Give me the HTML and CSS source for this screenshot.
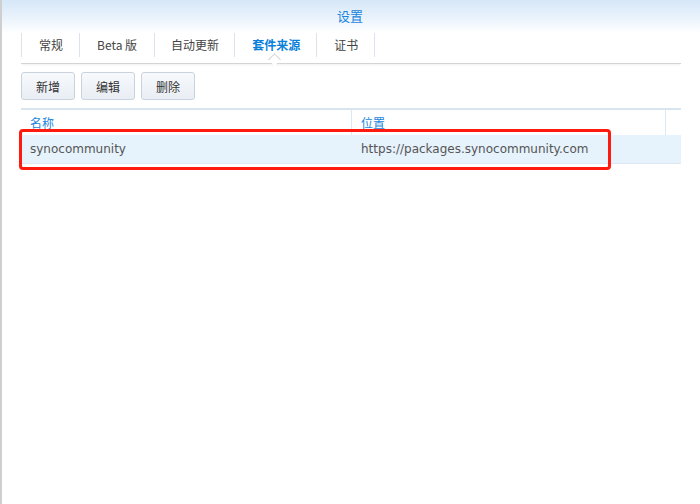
FILE: index.html
```html
<!DOCTYPE html>
<html lang="zh-CN">
<head>
<meta charset="utf-8">
<link rel="stylesheet" href="styles.css">
</head>
<body>
<div class="window">
  <div class="edge-top"></div>
  <div class="edge-active"></div>
  <div class="titlebar">设置</div>
  <div class="content">
    <div class="tabs">
      <div class="tab">常规</div>
      <div class="tab tab-beta">Beta 版</div>
      <div class="tab tab-auto">自动更新</div>
      <div class="tab active">套件来源</div>
      <div class="tab">证书</div>
      <div class="tab-end"></div>
    </div>
    <div class="toolbar">
      <button class="btn">新增</button>
      <button class="btn">编辑</button>
      <button class="btn">删除</button>
    </div>
    <div class="grid">
      <div class="grid-head">
        <div class="col col-name">名称</div>
        <div class="col col-loc">位置</div>
        <div class="col col-rest"></div>
      </div>
      <div class="grid-row">
        <div class="col col-name">synocommunity</div>
        <div class="col col-loc">https://packages.synocommunity.com</div>
        <div class="col col-rest"></div>
      </div>
      <div class="highlight"></div>
    </div>
  </div>
</div>
</body>
</html>
```

FILE: styles.css
```css
html, body {
  margin: 0;
  padding: 0;
  background: #ffffff;
}
body {
  font-family: "DejaVu Sans", "Noto Sans CJK SC", sans-serif;
  color: #555;
}
.window {
  position: relative;
  width: 700px;
  height: 504px;
  border-left: 2px solid #cfcfcf;
  box-sizing: border-box;
  overflow: hidden;
}
.edge-top {
  position: absolute;
  left: -2px;
  top: 0;
  width: 2px;
  height: 60px;
  background: #bdbdbd;
}
.edge-active {
  position: absolute;
  left: -2px;
  top: 127px;
  width: 2px;
  height: 50px;
  background: #0b6fc1;
}
.titlebar {
  height: 33px;
  line-height: 32px;
  text-align: center;
  font-family: "Noto Sans CJK SC", sans-serif;
  font-size: 13px;
  color: #1a85dc;
  background: linear-gradient(to bottom, #d6e7f8 0%, #eaf3fc 55%, #ffffff 100%);
  margin-left: -2px;
}
.content {
  padding: 0 19px 0 19px;
}
.tabs {
  display: flex;
  height: 30px;
  border-bottom: 1px solid #d4d4d4;
  box-shadow: 0 2px 2px -1px rgba(0,0,0,0.06);
  position: relative;
}
.tab {
  height: 24px;
  line-height: 24px;
  padding: 0 16px 0 17px;
  border-left: 1px solid #dde3ea;
  font-family: "Noto Sans CJK SC", sans-serif;
  font-size: 12px;
  color: #444;
  position: relative;
}
.tab-beta {
  padding: 0 17px 0 17px;
}
.tab-auto {
  padding: 0 15px 0 16px;
}
.tab.active {
  color: #0a7fd9;
  font-weight: bold;
}
.tab.active::after {
  content: "";
  position: absolute;
  left: 50%;
  bottom: -7px;
  margin-left: -6px;
  width: 8px;
  height: 8px;
  background: #fff;
  border-left: 1px solid #d4d4d4;
  border-top: 1px solid #d4d4d4;
  transform: rotate(45deg);
}
.tab-end {
  height: 24px;
  border-left: 1px solid #dde3ea;
}
.toolbar {
  display: flex;
  gap: 6px;
  padding-top: 8px;
}
.btn {
  width: 54px;
  height: 28px;
  padding: 0;
  border: 1px solid #c9d3de;
  border-radius: 3px;
  background: linear-gradient(to bottom, #f7f9fc, #e9eef4);
  font-family: "Noto Sans CJK SC", sans-serif;
  font-size: 12px;
  color: #333;
}
.grid {
  position: relative;
  margin-top: 8px;
  border-top: 2px solid #d8e4f0;
}
.grid-head {
  display: flex;
  height: 25px;
  font-family: "Noto Sans CJK SC", sans-serif;
  font-size: 12px;
  color: #1a85dc;
}
.grid-head .col {
  line-height: 25px;
  border-right: 1px solid #dde8f2;
}
.grid-head .col-rest {
  border-right: none;
}
.col {
  box-sizing: border-box;
  padding-left: 9px;
  white-space: nowrap;
}
.col-name { width: 331px; }
.col-loc { width: 314px; }
.col-rest { flex: 1; padding: 0; }
.grid-row {
  display: flex;
  height: 28px;
  line-height: 28px;
  background: #e6f2fc;
  border-bottom: 1px solid #dde8f2;
  font-size: 12px;
  color: #555;
}
.highlight {
  position: absolute;
  left: -2px;
  top: 19px;
  width: 592px;
  height: 41px;
  box-sizing: border-box;
  border: 3px solid #ff1a10;
  border-radius: 4px;
}
```
